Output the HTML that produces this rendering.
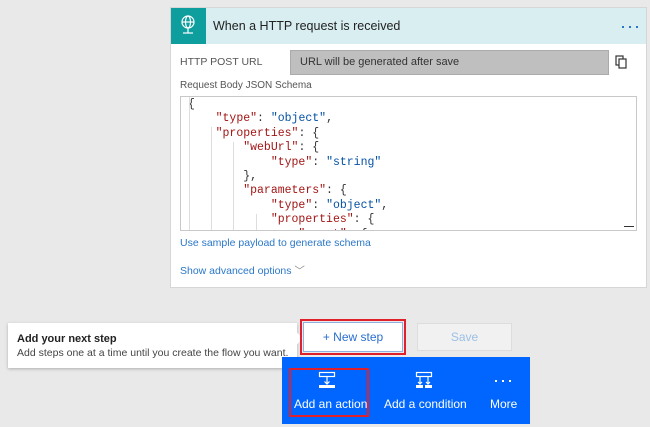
<!DOCTYPE html>
<html><head><meta charset="utf-8"><style>
*{box-sizing:border-box;margin:0;padding:0}
body{width:650px;height:427px;background:#e9e9e9;font-family:"Liberation Sans",sans-serif;position:relative;overflow:hidden}
.abs{position:absolute}
.card{left:170px;top:7px;width:477px;height:281px;background:#fff;border:1px solid #d6d6d6}
.hdr{left:0;top:0;width:475px;height:36px;background:#d8eef1}
.ico{left:0;top:0;width:35px;height:36px;background:#0f9e9e}
.t{font-size:12.5px;color:#222;white-space:nowrap}
.lbl{font-size:10.5px;color:#555;white-space:nowrap}
.code{left:180px;top:96px;width:457px;height:135px;border:1px solid #c8c8c8;background:#fff;overflow:hidden}
.code pre{font-family:"Liberation Mono",monospace;font-size:11.5px;line-height:14.4px;color:#333;position:absolute;left:7px;top:1px}
.k{color:#a31515}.s{color:#0451a5}
.link{font-size:10.5px;color:#2a77c9;white-space:nowrap}
.dot{position:absolute;width:2px;height:2px;background:#2a77c9}
.wd{position:absolute;width:2px;height:2px;background:#fff}
</style></head><body>
<div class="abs card">
 <div class="abs hdr"></div>
 <div class="abs ico">
  <svg width="35" height="36" viewBox="0 0 35 36"><g fill="none" stroke="#fff" stroke-width="1.2"><circle cx="17" cy="14" r="6"/><ellipse cx="17" cy="14" rx="2.5" ry="6"/><line x1="11" y1="14" x2="23" y2="14"/><line x1="17" y1="20" x2="17" y2="25"/><line x1="12" y1="25" x2="22" y2="25"/></g></svg>
 </div>
 <div class="abs t" style="left:42px;top:11px">When a HTTP request is received</div>
 <div class="dot" style="left:451px;top:18px"></div><div class="dot" style="left:458px;top:18px"></div><div class="dot" style="left:465px;top:18px"></div>
</div>
<div class="abs lbl" style="left:180px;top:56px">HTTP POST URL</div>
<div class="abs" style="left:290px;top:50px;width:319px;height:25px;background:#bfbfbf;border:1px solid #aaa"></div>
<div class="abs t" style="left:300px;top:56px;font-size:11px;color:#333">URL will be generated after save</div>
<svg class="abs" style="left:614px;top:55px" width="14" height="15" viewBox="0 0 14 15"><g fill="#fff" stroke="#333" stroke-width="1.2"><rect x="2" y="1" width="7" height="9"/><rect x="5" y="4" width="7" height="9"/></g></svg>
<div class="abs lbl" style="left:180px;top:80px;font-size:10px">Request Body JSON Schema</div>
<div class="abs code"><pre>{
    <span class="k">"type"</span>: <span class="s">"object"</span>,
    <span class="k">"properties"</span>: {
        <span class="k">"webUrl"</span>: {
            <span class="k">"type"</span>: <span class="s">"string"</span>
        },
        <span class="k">"parameters"</span>: {
            <span class="k">"type"</span>: <span class="s">"object"</span>,
            <span class="k">"properties"</span>: {
                <span class="k">"event"</span>: {</pre>
 <div class="abs" style="left:8px;top:0;width:1px;height:135px;background:#ddd"></div>
 <div class="abs" style="left:30px;top:30px;width:1px;height:105px;background:#ddd"></div>
 <div class="abs" style="left:52px;top:45px;width:1px;height:90px;background:#ddd"></div>
 <div class="abs" style="left:75px;top:117px;width:1px;height:18px;background:#ddd"></div>
 <div class="abs" style="left:443px;top:129px;width:10px;height:1px;background:#333"></div>
</div>
<div class="abs link" style="left:180px;top:237px">Use sample payload to generate schema</div>
<div class="abs link" style="left:180px;top:263px">Show advanced options <span style="color:#888">﹀</span></div>

<div class="abs" style="left:8px;top:323px;width:289px;height:45px;background:#fff;box-shadow:0 1px 3px rgba(0,0,0,.25)"></div>
<div class="abs" style="left:292px;top:334px;width:9px;height:9px;background:#fff;transform:rotate(45deg)"></div>
<div class="abs" style="left:17px;top:333px;font-size:11px;font-weight:bold;color:#222">Add your next step</div>
<div class="abs" style="left:17px;top:347px;font-size:10.5px;color:#444;white-space:nowrap">Add steps one at a time until you create the flow you want.</div>

<div class="abs" style="left:300px;top:319px;width:106px;height:36px;border:2px solid #e0202a"></div>
<div class="abs" style="left:303px;top:322px;width:100px;height:30px;background:#fff;border:1px solid #8fb0e0;text-align:center;line-height:28px;font-size:12px;color:#2a6fd0">+ New step</div>
<div class="abs" style="left:417px;top:323px;width:95px;height:28px;background:#f1f1f1;border:1px solid #ddd;text-align:center;line-height:26px;font-size:12px;color:#9bbfe6">Save</div>

<div class="abs" style="left:282px;top:357px;width:248px;height:67px;background:#0066ff"></div>
<div class="abs" style="left:289px;top:368px;width:80px;height:49px;border:2px solid #e0202a"></div>
<svg class="abs" style="left:317px;top:370px" width="20" height="20" viewBox="0 0 20 20"><g fill="none" stroke="#fff" stroke-width="1.2"><rect x="2.5" y="2.5" width="15" height="4"/><line x1="10" y1="6.5" x2="10" y2="14"/><path d="M7.5 11.5 L10 14 L12.5 11.5"/></g><rect x="2" y="15" width="16" height="3" fill="#fff"/></svg>
<svg class="abs" style="left:414px;top:370px" width="20" height="20" viewBox="0 0 20 20"><g fill="none" stroke="#fff" stroke-width="1.2"><rect x="2.5" y="2.5" width="15" height="4"/><line x1="6" y1="6.5" x2="6" y2="14"/><line x1="14" y1="6.5" x2="14" y2="14"/><path d="M4 12 L6 14 L8 12 M12 12 L14 14 L16 12"/></g><rect x="2" y="15" width="7" height="3" fill="#fff"/><rect x="11" y="15" width="7" height="3" fill="#fff"/></svg>
<div class="wd" style="left:495px;top:380px"></div><div class="wd" style="left:502px;top:380px"></div><div class="wd" style="left:509px;top:380px"></div>
<div class="abs" style="left:294px;top:397px;color:#fff;font-size:12px">Add an action</div>
<div class="abs" style="left:384px;top:397px;color:#fff;font-size:12px">Add a condition</div>
<div class="abs" style="left:490px;top:397px;color:#fff;font-size:12px">More</div>
</body></html>
